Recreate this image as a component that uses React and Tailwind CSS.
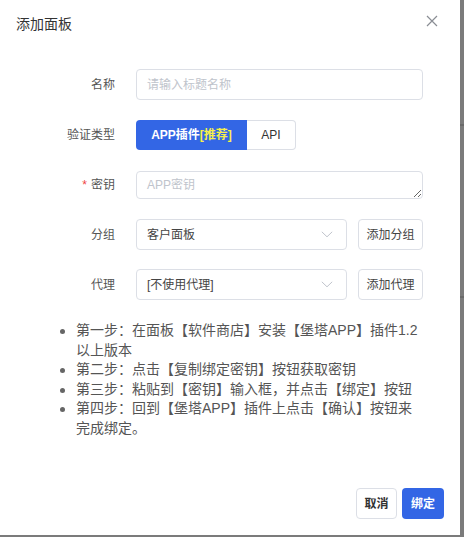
import React from "react";

const font = { fontFamily: '"Liberation Sans", "Noto Sans CJK SC", sans-serif' };

function Chevron() {
  return (
    <svg width="12" height="7" viewBox="0 0 12 7" fill="none" className="shrink-0">
      <path d="M0.8 0.8 L6 5.8 L11.2 0.8" stroke="#c0c4cc" strokeWidth="1" />
    </svg>
  );
}

function Label({ children, required }) {
  return (
    <div className="w-[115px] shrink-0 flex justify-end items-center text-[12px] text-[#555]">
      {required && <span className="text-[#ef4444] text-[12px] mr-[4px] leading-none">*</span>}
      <span>{children}</span>
    </div>
  );
}

function Select({ value }) {
  return (
    <div className="w-[211px] h-[31px] border border-[#dcdfe6] rounded-[4px] flex items-center justify-between pl-[10px] pr-[13px]">
      <span className="text-[12px] text-[#444]">{value}</span>
      <Chevron />
    </div>
  );
}

function SideBtn({ children }) {
  return (
    <div className="ml-[11px] w-[65px] h-[31px] border border-[#dcdfe6] rounded-[4px] flex items-center justify-center text-[12px] text-[#444]">
      {children}
    </div>
  );
}

const steps = [
  "第一步：在面板【软件商店】安装【堡塔APP】插件1.2以上版本",
  "第二步：点击【复制绑定密钥】按钮获取密钥",
  "第三步：粘贴到【密钥】输入框，并点击【绑定】按钮",
  "第四步：回到【堡塔APP】插件上点击【确认】按钮来完成绑定。",
];

export default function App() {
  return (
    <div className="w-[464px] h-[537px] bg-[#7b7b7b] relative overflow-hidden" style={font}>
      <div className="absolute left-[460px] top-[124px] w-[4px] h-[2px] bg-[#6a6a6a]" />
      <div className="absolute left-[460px] top-[296px] w-[4px] h-[2px] bg-[#6a6a6a]" />
      <div className="w-[460px] h-[535px] bg-white flex flex-col">
        <div className="h-[69px] flex items-start justify-between pl-[16px] pr-[22px] pt-[14px] shrink-0">
          <div className="text-[14px] leading-[20px] text-[#333]">添加面板</div>
          <svg width="12" height="12" viewBox="0 0 12 12" className="mt-[1px]">
            <path d="M1 1 L11 11 M11 1 L1 11" stroke="#8a8d94" strokeWidth="1.2" />
          </svg>
        </div>

        <div className="flex flex-col">
          <div className="flex items-center h-[31px]">
            <Label>名称</Label>
            <div className="ml-[21px] w-[287px] h-[31px] border border-[#dcdfe6] rounded-[4px] flex items-center pl-[10px] text-[12px] text-[#c0c4cc]">
              请输入标题名称
            </div>
          </div>

          <div className="flex items-center h-[30px] mt-[20px]">
            <Label>验证类型</Label>
            <div className="ml-[21px] flex h-[30px]">
              <div className="w-[111px] h-full bg-[#3366e5] rounded-l-[4px] flex items-center justify-center text-[12px] font-bold text-white">
                APP插件<span className="text-[#f7f04a]">[推荐]</span>
              </div>
              <div className="w-[49px] h-full border border-l-0 border-[#dcdfe6] rounded-r-[4px] flex items-center justify-center text-[12px] text-[#333]">
                API
              </div>
            </div>
          </div>

          <div className="flex items-center h-[28px] mt-[21px]">
            <Label required>密钥</Label>
            <textarea
              readOnly
              placeholder="APP密钥"
              className="ml-[21px] w-[287px] h-[28px] border border-[#dcdfe6] rounded-[4px] pl-[10px] pt-[5px] text-[12px] leading-[16px] placeholder:text-[#c0c4cc] outline-none"
              style={font}
            />
          </div>

          <div className="flex items-center h-[31px] mt-[20px]">
            <Label>分组</Label>
            <div className="ml-[21px] flex">
              <Select value="客户面板" />
              <SideBtn>添加分组</SideBtn>
            </div>
          </div>

          <div className="flex items-center h-[31px] mt-[19px]">
            <Label>代理</Label>
            <div className="ml-[21px] flex">
              <Select value="[不使用代理]" />
              <SideBtn>添加代理</SideBtn>
            </div>
          </div>
        </div>

        <ul className="mt-[21px] flex flex-col">
          {steps.map((s, i) => (
            <li key={i} className="flex text-[14px] leading-[19.5px] text-[#555] [text-spacing-trim:space-all]">
              <div className="w-[76px] shrink-0 flex justify-end pr-[11px] pt-[8px]">
                <div className="w-[5px] h-[5px] rounded-full bg-[#666]" />
              </div>
              <div className="w-[345px]">{s}</div>
            </li>
          ))}
        </ul>

        <div className="mt-auto flex justify-end gap-[5px] pr-[16px] pb-[16px]">
          <div className="w-[41px] h-[31px] border border-[#dcdfe6] rounded-[4px] flex items-center justify-center text-[12px] font-bold text-[#333]">
            取消
          </div>
          <div className="w-[42px] h-[31px] bg-[#3366e5] rounded-[4px] flex items-center justify-center text-[12px] font-bold text-white">
            绑定
          </div>
        </div>
      </div>
    </div>
  );
}
